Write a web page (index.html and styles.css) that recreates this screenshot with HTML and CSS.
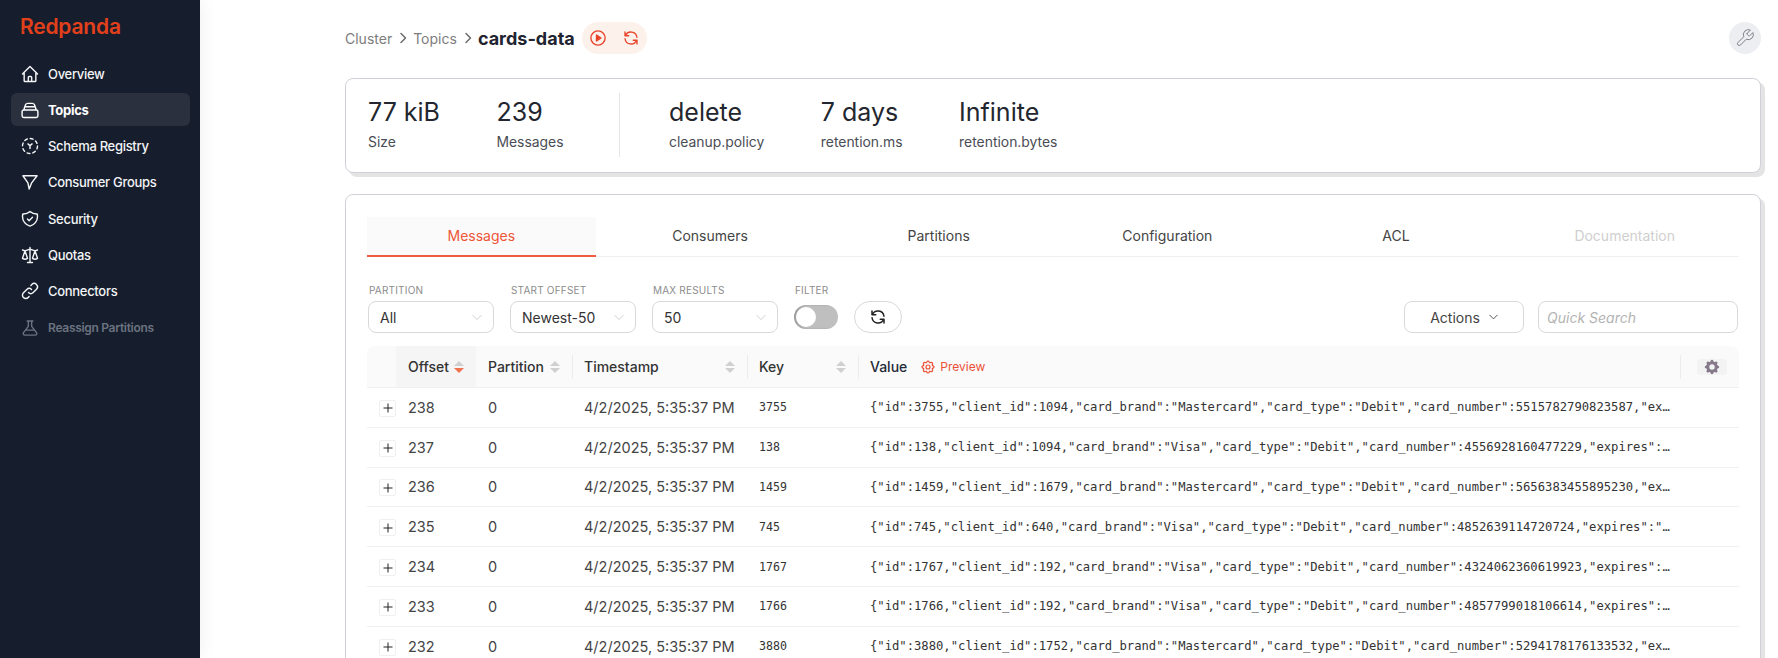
FILE: index.html
```html
<!DOCTYPE html>
<html lang="en">
<head>
  <meta charset="UTF-8">
  <title>Redpanda - cards-data</title>
  <link rel="stylesheet" href="styles.css">
</head>
<body>
  <aside class="sidebar">
    <div class="logo"><span class="logo-text">Redpanda<svg class="logo-cut" viewBox="0 0 10 8"><path d="M1 1.500l4 2M2 4l4 2"/></svg></span></div>
    <nav class="nav">
      <a class="nav-item"><svg class="nav-icon" viewBox="0 0 24 24"><path d="M3 12l2-2m0 0l7-7 7 7M5 10v10a1 1 0 001 1h3m10-11l2 2m-2-2v10a1 1 0 01-1 1h-3m-6 0a1 1 0 001-1v-4a1 1 0 011-1h2a1 1 0 011 1v4a1 1 0 001 1m-6 0h6"/></svg>Overview</a>
      <a class="nav-item active"><svg class="nav-icon" viewBox="0 0 24 24"><path d="M19.500 12h-15m15 0a2 2 0 012 2v5a2 2 0 01-2 2h-15a2 2 0 01-2-2v-5a2 2 0 012-2m15 0l-2-6a3 3 0 00-2.500-2h-6a3 3 0 00-2.500 2l-2 6m2.500-4h11"/></svg>Topics</a>
      <a class="nav-item"><svg class="nav-icon" viewBox="0 0 24 24"><circle cx="12" cy="12" r="9" stroke-dasharray="3.500 3.570"/><path d="M9.500 9.500l2.500 2 2.500-2M12 11.500V15"/></svg>Schema Registry</a>
      <a class="nav-item"><svg class="nav-icon" viewBox="0 0 24 24"><path d="M3.500 4.500h17L14 13l-3 7.500-1.500-7.500z"/></svg>Consumer Groups</a>
      <a class="nav-item"><svg class="nav-icon" viewBox="0 0 24 24"><path d="M9 12l2 2 4-4m5.618-4.016A11.955 11.955 0 0112 2.944a11.955 11.955 0 01-8.618 3.04A12.02 12.02 0 003 9c0 5.591 3.824 10.29 9 11.622 5.176-1.332 9-6.03 9-11.622 0-1.042-.133-2.052-.382-3.016z"/></svg>Security</a>
      <a class="nav-item"><svg class="nav-icon" viewBox="0 0 24 24"><path d="M3 6l3 1m0 0l-3 9a5.002 5.002 0 006.001 0M6 7l3 9M6 7l6-2m6 2l3-1m-3 1l-3 9a5.002 5.002 0 006.001 0M18 7l3 9m-3-9l-6-2m0-2v2m0 16V5m0 16H9m3 0h3"/></svg>Quotas</a>
      <a class="nav-item"><svg class="nav-icon" viewBox="0 0 24 24"><path d="M13.828 10.172a4 4 0 00-5.656 0l-4 4a4 4 0 105.656 5.656l1.102-1.101m-.758-4.899a4 4 0 005.656 0l4-4a4 4 0 00-5.656-5.656l-1.1 1.1"/></svg>Connectors</a>
      <a class="nav-item off"><svg class="nav-icon" viewBox="0 0 24 24"><path d="M8.500 3.500h7M10 3.500V10l-5.800 7.500c-.9 1.300 0 3 1.600 3h12.400c1.600 0 2.500-1.700 1.600-3L14 10V3.500M7 14.500h10"/></svg>Reassign Partitions</a>
    </nav>
  </aside>

  <main class="main">
    <header class="page-head">
      <span class="crumb">Cluster</span>
      <svg class="crumb-sep" viewBox="0 0 10 12"><path d="M3 1.500l4.500 4.500L3 10.500"/></svg>
      <span class="crumb">Topics</span>
      <svg class="crumb-sep" viewBox="0 0 10 12"><path d="M3 1.500l4.500 4.500L3 10.500"/></svg>
      <h1 class="topic-name">cards-data</h1>
      <div class="head-actions">
        <svg class="head-icon" viewBox="0 0 24 24"><circle cx="12" cy="12" r="9.500"/><path class="fill" d="M10 8l6 4-6 4z"/></svg>
        <svg class="head-icon" viewBox="0 0 24 24"><path d="M4 4v5h.582m15.356 2A8.001 8.001 0 004.582 9m0 0H9m11 11v-5h-.581m0 0a8.003 8.003 0 01-15.357-2m15.357 2H15"/></svg>
      </div>
      <button class="tool-btn"><svg viewBox="0 0 24 24"><path d="M14.700 6.300a1 1 0 000 1.400l1.600 1.600a1 1 0 001.400 0l3.770-3.770a6 6 0 01-7.940 7.940l-6.910 6.910a2.120 2.120 0 01-3-3l6.910-6.910a6 6 0 017.940-7.940l-3.760 3.760z"/></svg></button>
    </header>

    <section class="card stats">
      <div class="stat"><div class="stat-value">77 kiB</div><div class="stat-label">Size</div></div>
      <div class="stat"><div class="stat-value">239</div><div class="stat-label">Messages</div></div>
      <div class="stat-divider"></div>
      <div class="stat"><div class="stat-value">delete</div><div class="stat-label">cleanup.policy</div></div>
      <div class="stat"><div class="stat-value">7 days</div><div class="stat-label">retention.ms</div></div>
      <div class="stat"><div class="stat-value">Infinite</div><div class="stat-label">retention.bytes</div></div>
    </section>

    <section class="card messages">
      <div class="tabs">
        <div class="tab active">Messages</div>
        <div class="tab">Consumers</div>
        <div class="tab">Partitions</div>
        <div class="tab">Configuration</div>
        <div class="tab">ACL</div>
        <div class="tab disabled">Documentation</div>
      </div>

      <div class="toolbar">
        <div class="field">
          <label class="field-label">Partition</label>
          <div class="select">All<svg class="chev" viewBox="0 0 12 8"><path d="M1 1.500l5 5 5-5"/></svg></div>
        </div>
        <div class="field">
          <label class="field-label">Start Offset</label>
          <div class="select">Newest-50<svg class="chev" viewBox="0 0 12 8"><path d="M1 1.500l5 5 5-5"/></svg></div>
        </div>
        <div class="field">
          <label class="field-label">Max Results</label>
          <div class="select">50<svg class="chev" viewBox="0 0 12 8"><path d="M1 1.500l5 5 5-5"/></svg></div>
        </div>
        <div class="field filter">
          <label class="field-label">Filter</label>
          <div class="switch"><span class="knob"></span></div>
        </div>
        <button class="refresh"><svg viewBox="0 0 24 24"><path d="M4 4v5h.582m15.356 2A8.001 8.001 0 004.582 9m0 0H9m11 11v-5h-.581m0 0a8.003 8.003 0 01-15.357-2m15.357 2H15"/></svg></button>
        <button class="actions">Actions<svg class="chev dark" viewBox="0 0 12 8"><path d="M1 1.500l5 5 5-5"/></svg></button>
        <div class="search">Quick Search</div>
      </div>

      <table class="msg-table">
        <colgroup>
          <col class="c-expand"><col class="c-offset"><col class="c-part"><col class="c-time"><col class="c-key"><col class="c-value"><col class="c-set">
        </colgroup>
        <thead>
          <tr>
            <th></th>
            <th class="sorted"><div class="th-in">Offset<span class="sorter desc"><i></i><i></i></span></div></th>
            <th><div class="th-in">Partition<span class="sorter"><i></i><i></i></span></div></th>
            <th class="sep"><div class="th-in">Timestamp<span class="sorter"><i></i><i></i></span></div></th>
            <th class="sep"><div class="th-in">Key<span class="sorter"><i></i><i></i></span></div></th>
            <th class="sep"><div class="th-value">Value
              <span class="preview"><svg viewBox="0 0 24 24"><path d="M10.325 4.317c.426-1.756 2.924-1.756 3.350 0a1.724 1.724 0 002.573 1.066c1.543-.940 3.310.826 2.370 2.370a1.724 1.724 0 001.065 2.572c1.756.426 1.756 2.924 0 3.350a1.724 1.724 0 00-1.066 2.573c.940 1.543-.826 3.310-2.370 2.370a1.724 1.724 0 00-2.572 1.065c-.426 1.756-2.924 1.756-3.350 0a1.724 1.724 0 00-2.573-1.066c-1.543.940-3.310-.826-2.370-2.370a1.724 1.724 0 00-1.065-2.572c-1.756-.426-1.756-2.924 0-3.350a1.724 1.724 0 001.066-2.573c-.940-1.543.826-3.310 2.370-2.370.996.608 2.296.070 2.572-1.065z"/><circle cx="12" cy="12" r="3"/></svg>Preview</span>
            </div></th>
            <th class="sep"><span class="col-settings"><svg viewBox="0 0 20 20"><path fill-rule="evenodd" d="M11.490 3.170c-.380-1.560-2.600-1.560-2.980 0a1.532 1.532 0 01-2.286.948c-1.372-.836-2.942.734-2.106 2.106.540.886.061 2.042-.947 2.287-1.561.379-1.561 2.600 0 2.978a1.532 1.532 0 01.947 2.287c-.836 1.372.734 2.942 2.106 2.106a1.532 1.532 0 012.287.947c.379 1.561 2.600 1.561 2.978 0a1.533 1.533 0 012.287-.947c1.372.836 2.942-.734 2.106-2.106a1.533 1.533 0 01.947-2.287c1.561-.379 1.561-2.600 0-2.978a1.532 1.532 0 01-.947-2.287c.836-1.372-.734-2.942-2.106-2.106a1.532 1.532 0 01-2.287-.947zM10 13a3 3 0 100-6 3 3 0 000 6z"/></svg></span></th>
          </tr>
        </thead>
        <tbody>
          <tr><td><span class="expand"><svg viewBox="0 0 12 12"><path d="M6 1.500v9M1.500 6h9"/></svg></span></td><td>238</td><td>0</td><td>4/2/2025, 5:35:37 PM</td><td class="mono key">3755</td><td class="mono val">{"id":3755,"client_id":1094,"card_brand":"Mastercard","card_type":"Debit","card_number":5515782790823587,"ex…</td><td></td></tr>
          <tr><td><span class="expand"><svg viewBox="0 0 12 12"><path d="M6 1.500v9M1.500 6h9"/></svg></span></td><td>237</td><td>0</td><td>4/2/2025, 5:35:37 PM</td><td class="mono key">138</td><td class="mono val">{"id":138,"client_id":1094,"card_brand":"Visa","card_type":"Debit","card_number":4556928160477229,"expires":…</td><td></td></tr>
          <tr><td><span class="expand"><svg viewBox="0 0 12 12"><path d="M6 1.500v9M1.500 6h9"/></svg></span></td><td>236</td><td>0</td><td>4/2/2025, 5:35:37 PM</td><td class="mono key">1459</td><td class="mono val">{"id":1459,"client_id":1679,"card_brand":"Mastercard","card_type":"Debit","card_number":5656383455895230,"ex…</td><td></td></tr>
          <tr><td><span class="expand"><svg viewBox="0 0 12 12"><path d="M6 1.500v9M1.500 6h9"/></svg></span></td><td>235</td><td>0</td><td>4/2/2025, 5:35:37 PM</td><td class="mono key">745</td><td class="mono val">{"id":745,"client_id":640,"card_brand":"Visa","card_type":"Debit","card_number":4852639114720724,"expires":"…</td><td></td></tr>
          <tr><td><span class="expand"><svg viewBox="0 0 12 12"><path d="M6 1.500v9M1.500 6h9"/></svg></span></td><td>234</td><td>0</td><td>4/2/2025, 5:35:37 PM</td><td class="mono key">1767</td><td class="mono val">{"id":1767,"client_id":192,"card_brand":"Visa","card_type":"Debit","card_number":4324062360619923,"expires":…</td><td></td></tr>
          <tr><td><span class="expand"><svg viewBox="0 0 12 12"><path d="M6 1.500v9M1.500 6h9"/></svg></span></td><td>233</td><td>0</td><td>4/2/2025, 5:35:37 PM</td><td class="mono key">1766</td><td class="mono val">{"id":1766,"client_id":192,"card_brand":"Visa","card_type":"Debit","card_number":4857799018106614,"expires":…</td><td></td></tr>
          <tr><td><span class="expand"><svg viewBox="0 0 12 12"><path d="M6 1.500v9M1.500 6h9"/></svg></span></td><td>232</td><td>0</td><td>4/2/2025, 5:35:37 PM</td><td class="mono key">3880</td><td class="mono val">{"id":3880,"client_id":1752,"card_brand":"Mastercard","card_type":"Debit","card_number":5294178176133532,"ex…</td><td></td></tr>
        </tbody>
      </table>
    </section>
  </main>
</body>
</html>
```

FILE: styles.css
```css
*{box-sizing:border-box}
html,body{height:100%}
body{margin:0;display:flex;height:658px;overflow:hidden;background:#fff;color:#262626;font-family:Inter,"Noto Sans",sans-serif;font-size:14px}
svg{fill:none;stroke:currentColor;stroke-width:2;stroke-linecap:round;stroke-linejoin:round;flex-shrink:0}
button{font-family:inherit;cursor:pointer;background:#fff}

/* sidebar */
.sidebar{width:200px;flex-shrink:0;background:#161e2d;box-shadow:0 0 18px rgba(0,0,0,.07);padding:0 10px 0 11px}
.logo{height:57px;padding:12px 0 0 9px;font-size:21px;line-height:29px;font-weight:600;letter-spacing:-.2px;color:#e2401b}
.logo-text{position:relative;display:inline-block}
.logo-cut{position:absolute;left:3px;top:17px;width:10px;height:8px;color:#161e2d;stroke-width:1.2}
.nav{display:flex;flex-direction:column;gap:3.3px}
.nav-item{display:flex;align-items:center;gap:8px;height:33px;padding-left:9px;border-radius:6px;color:#f3f4f6;font-size:13px;letter-spacing:-.3px;font-weight:500}
.nav-icon{width:20px;height:20px;stroke-width:1.7}
.nav-item.active{background:#2a303e;font-weight:700;color:#fff}
.nav-item.off{color:#6b7280;font-size:12px;font-weight:600}

/* page */
.main{flex:1;min-width:0;padding:0 17px 0 145px}
.page-head{display:flex;align-items:center;height:78px;padding-bottom:2px}
.crumb{color:#7d7d7d;font-size:14px}
.crumb-sep{width:10px;height:12px;margin:0 5px 0 6px;color:#6b6b6b;stroke-width:1.5}
.topic-name{margin:0;font-size:18px;font-weight:700;color:#1f2430}
.head-actions{display:flex;align-items:center;gap:15px;height:32px;margin-left:7px;padding:0 7px;border-radius:16px;background:#fdf1ec;color:#e8432a}
.head-icon{width:18px;height:18px;stroke-width:1.8}
.head-icon .fill{fill:currentColor}
.tool-btn{margin-left:auto;margin-right:0;width:32px;height:32px;padding:0;border:0;border-radius:50%;background:#edeef1;color:#7a7f8a;display:flex;align-items:center;justify-content:center}
.tool-btn svg{width:20px;height:20px;stroke-width:1.2}

.card{background:#fff;border:1px solid #d0d1d8;border-radius:8px;box-shadow:4px 4px 0 #e4e4e4}
.stats{display:flex;align-items:flex-start;height:95px;padding:14px 22px 0;gap:56.5px;margin-bottom:21px}
.stat-value{font-size:25px;line-height:38px;color:#23262e;white-space:nowrap}
.stat-label{font-size:13.9px;line-height:20px;margin-top:1px;color:#4a4d55;white-space:nowrap}
.stat-divider{width:1px;height:64px;background:#e5e5e7;margin:0 -7.5px 0 -1px}

.messages{padding:22px 21px 0;height:520px}
.tabs{display:flex;border-bottom:1px solid #f0f0f0;height:40px}
.tab{flex:1;display:flex;align-items:center;justify-content:center;padding-bottom:2px;color:#444;font-size:14px}
.tab.active{color:#ee5537;background:#fafafa;border-bottom:2px solid #ee5d42;height:40px}
.tab.disabled{color:#cfcfcf}

.toolbar{display:flex;align-items:flex-end;margin:27px 1px 13px 0}
.field{display:flex;flex-direction:column;margin:0 16px 0 1px;width:126px}
.field + .field{margin-left:0}
.field-label{font-size:10px;line-height:13px;letter-spacing:.2px;text-transform:uppercase;color:#8c8c8c;margin:0 0 4px 1px}
.select{display:flex;align-items:center;justify-content:space-between;height:32px;padding:0 11px;border:1px solid #d9d9d9;border-radius:8px;font-size:14px;color:#333}
.chev{width:10px;height:7px;color:#c4c4c4;stroke-width:1}
.chev.dark{color:#444;margin-left:9px;width:9px;height:6px;stroke-width:1.2}
.filter{width:44px;margin-right:16px}
.filter .field-label{margin-bottom:8px}
.switch{height:24px;margin-bottom:4px;border-radius:12px;background:#bfbfbf;padding:2px;box-shadow:inset 2px 0 2px rgba(0,0,0,.2)}
.knob{display:block;width:20px;height:20px;border-radius:50%;background:#fff}
.refresh{width:48px;height:32px;padding:0;border:1px solid #d9d9d9;border-radius:16px;display:flex;align-items:center;justify-content:center;color:#222}
.refresh svg{width:18px;height:18px}
.actions{margin-left:auto;width:120px;height:32px;padding:0;border:1px solid #d9d9d9;border-radius:8px;display:flex;align-items:center;justify-content:center;font-size:14px;color:#444}
.search{width:200px;height:32px;margin-left:14px;padding:0 8px;border:1px solid #d9d9d9;border-radius:8px;display:flex;align-items:center;font-style:italic;color:#b3b3b3}

/* table */
.msg-table{width:100%;table-layout:fixed;border-collapse:separate;border-spacing:0}
.c-expand{width:29px}
.c-offset{width:80px}
.c-part{width:96px}
.c-time{width:175px}
.c-key{width:111px}
.c-set{width:59px}
thead th{height:42px;padding:0 12px;background:#fafafa;border-bottom:1px solid #f0f0f0;text-align:left;font-weight:500;font-size:14px;color:#333;position:relative}
thead th:first-child{border-top-left-radius:8px}
thead th:last-child{border-top-right-radius:8px}
th.sorted{background:#f5f5f5}
th.sep::before{content:"";position:absolute;left:0;top:50%;height:24px;margin-top:-12px;width:1px;background:#ececec}
.th-in{display:flex;align-items:center;justify-content:space-between}
.th-value{display:flex;align-items:center;gap:13px;color:#1f2937}
.sorter{display:flex;flex-direction:column;gap:2px}
.sorter i{display:block;width:0;height:0;border-left:5px solid transparent;border-right:5px solid transparent;border-bottom:5px solid #d0d0d0}
.sorter i + i{border-bottom:0;border-top:5px solid #d0d0d0}
.sorter.desc i + i{border-top-color:#f0714f}
.preview{display:flex;align-items:center;gap:4px;font-size:12px;font-weight:400;color:#ec5037}
.preview svg{width:16px;height:16px;stroke-width:1.8}
.col-settings{display:flex;align-items:center;justify-content:center;width:30px;height:16px;margin-left:5px;border-radius:4px;background:#f3f3f3;color:#85798a}
.col-settings svg{width:18px;height:18px;fill:currentColor;stroke:none}
tbody td{height:39.8px;padding:0 12px;border-bottom:1px solid #f0f0f0;white-space:nowrap;overflow:hidden;color:#444;font-size:14.5px}
tbody td:first-child{padding-right:0;overflow:visible}
.expand{display:flex;align-items:center;justify-content:center;width:17px;height:17px;margin-top:2px;border:1px solid #f0f0f0;border-radius:2px;color:#222}
.expand svg{width:12px;height:12px;stroke-width:1;stroke-linecap:butt}
.mono{font-family:"DejaVu Sans Mono",monospace;color:#333}
.key{font-size:11.6px}
.val{font-size:12.2px}
```
